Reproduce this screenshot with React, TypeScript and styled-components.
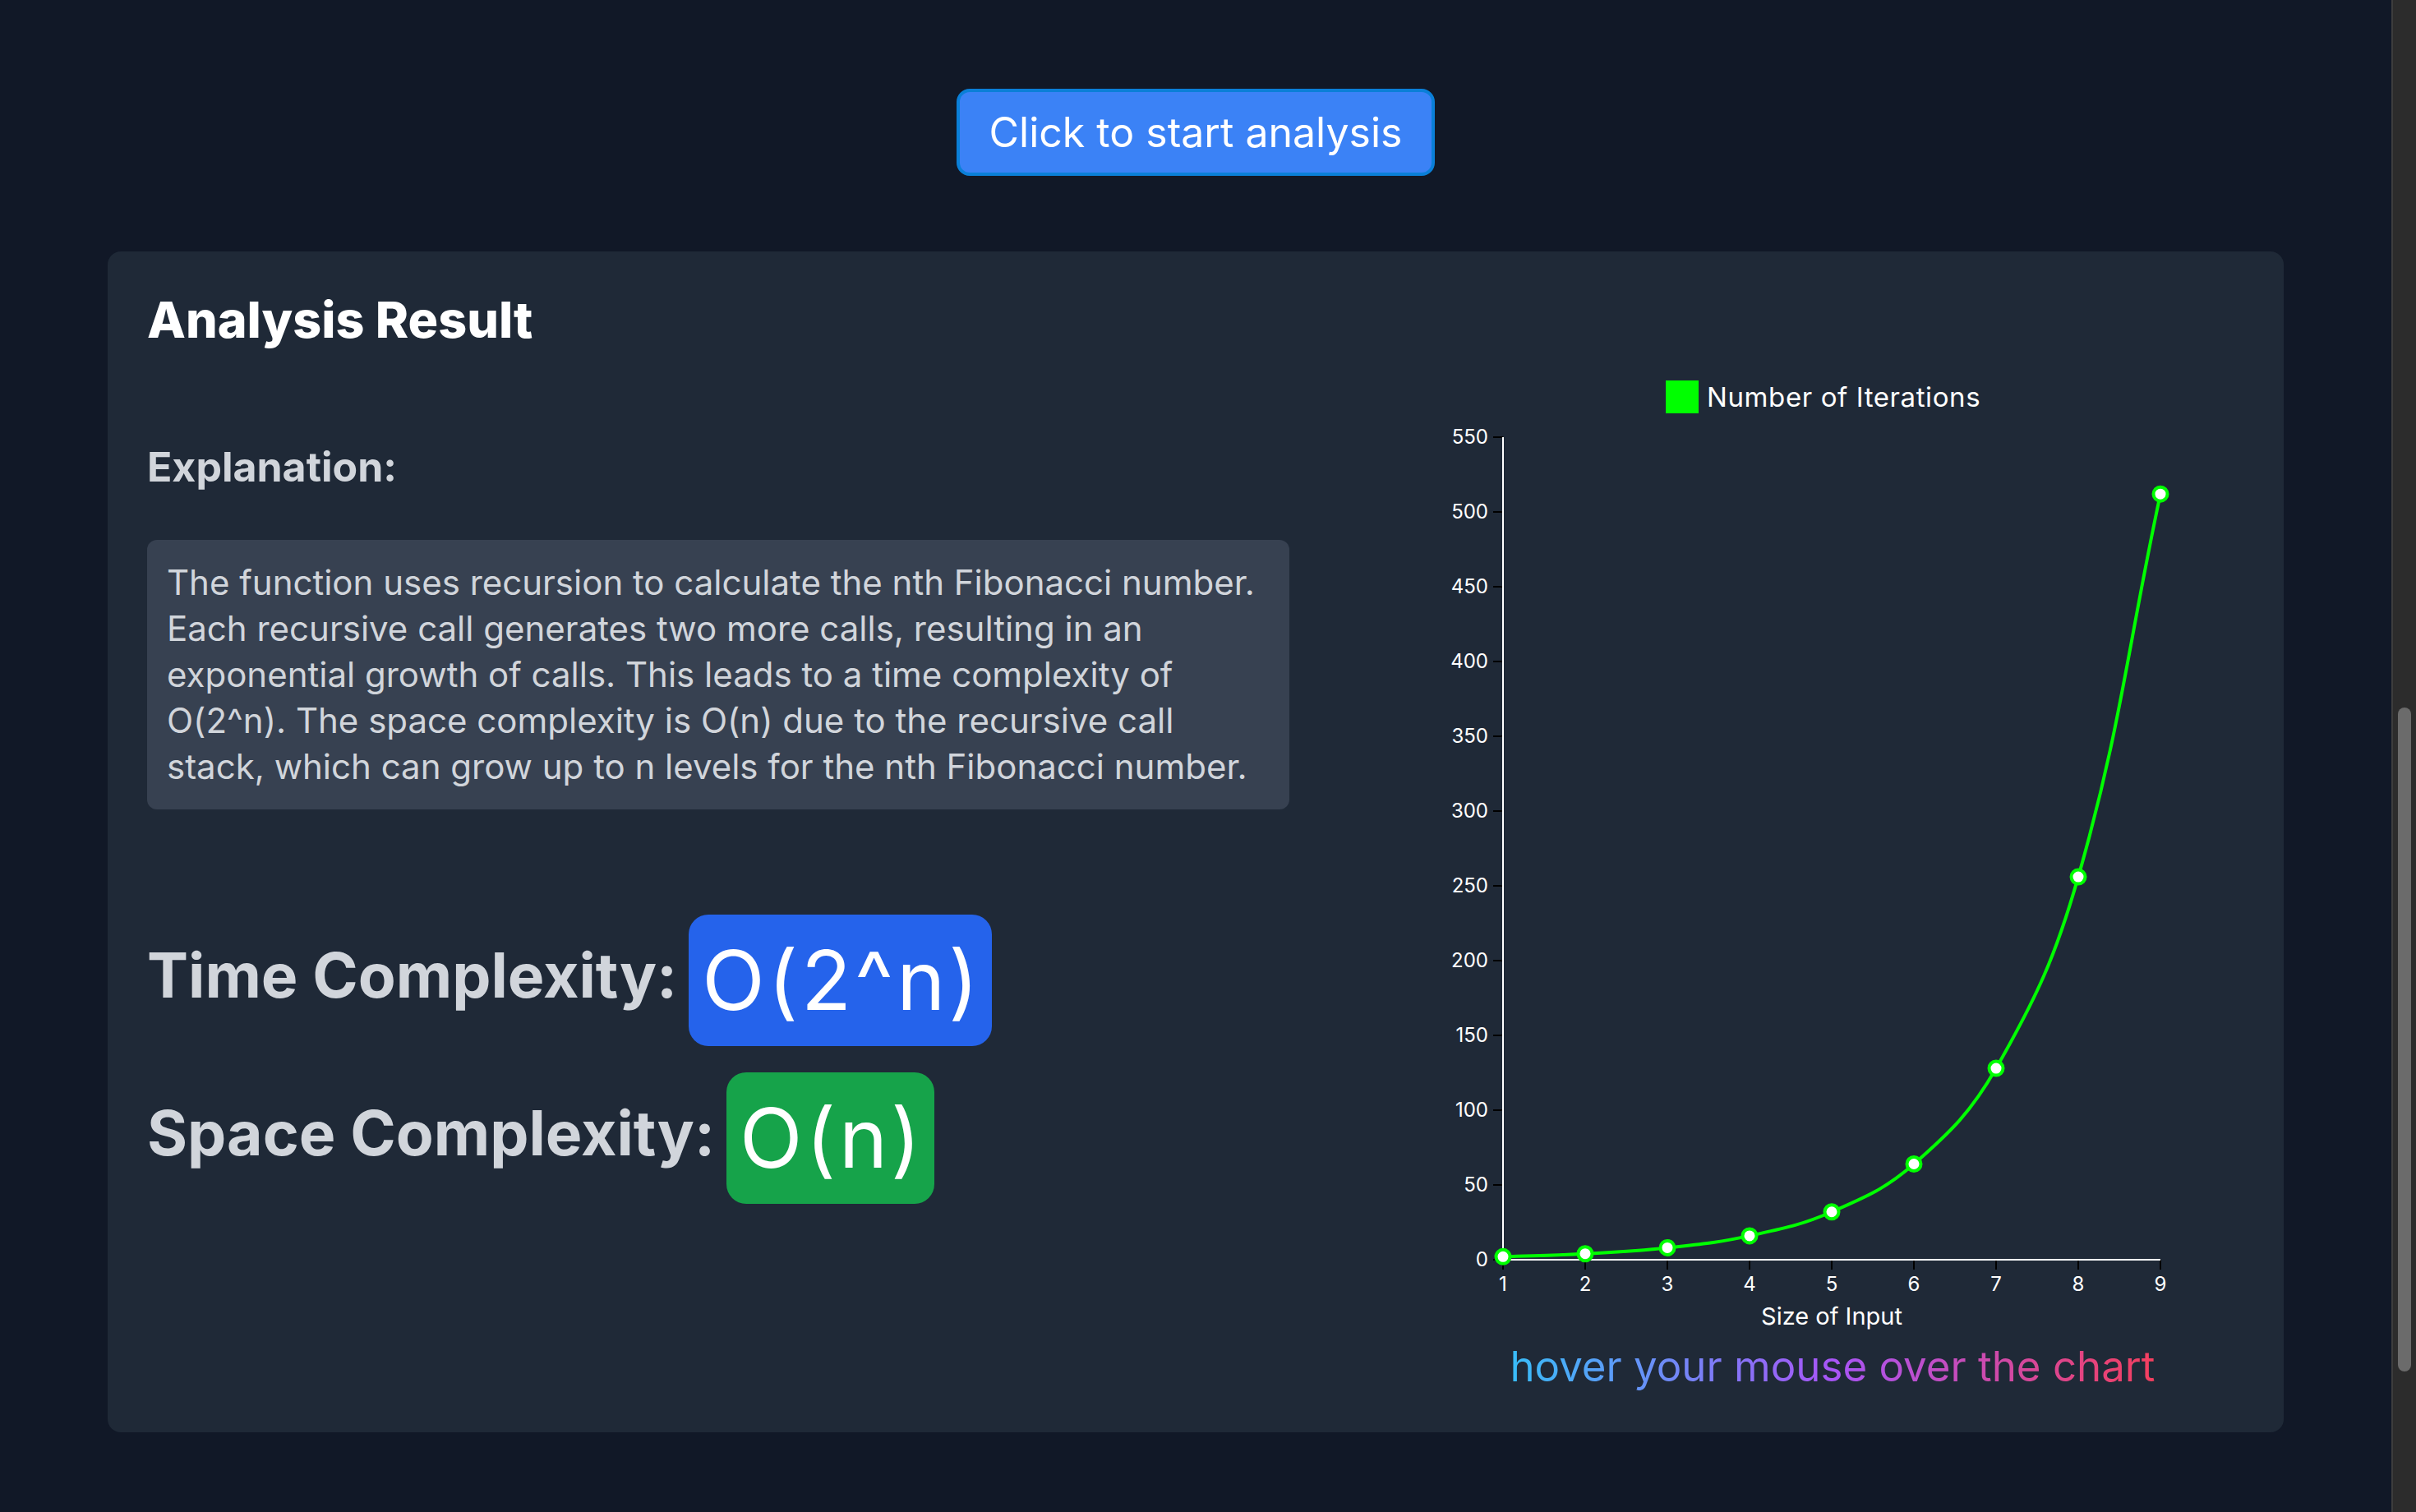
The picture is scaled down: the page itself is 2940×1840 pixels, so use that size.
import React from 'react';
import styled, { createGlobalStyle } from 'styled-components';

const GlobalStyle = createGlobalStyle`
    html, body {
        margin: 0;
        padding: 0;
        background: #111827;
        overflow: hidden;
    }
    body {
        font-family: Inter, "Noto Sans", sans-serif;
    }
`

const Page = styled.div`
    display: flex;
    height: 1840px;
`

const Main = styled.main`
    flex: 1;
    display: flex;
    flex-direction: column;
    align-items: center;
    padding-top: 108px;
`

const StartButton = styled.button`
    width: 582px;
    height: 106px;
    box-sizing: border-box;
    background: #3b82f6;
    border: 4px solid #0a7fd8;
    border-radius: 16px;
    color: #ffffff;
    font-family: Inter, sans-serif;
    font-size: 50px;
    cursor: pointer;
`

const Card = styled.section`
    align-self: stretch;
    margin: 92px 131px 0;
    padding: 48px;
    background: #1f2937;
    border-radius: 16px;
`

const Title = styled.h2`
    margin: 0;
    font-size: 61px;
    line-height: 70px;
    font-weight: 800;
    color: #ffffff;
`

const Columns = styled.div`
    display: flex;
    align-items: flex-start;
    padding-top: 2px;
`

const LeftCol = styled.div`
    width: 1390px;
    flex: 0 0 1390px;
    padding-top: 110px;
`

const SectionHeading = styled.h3`
    margin: 0 0 57px;
    font-size: 50px;
    line-height: 64px;
    font-weight: 700;
    color: #d1d5db;
`

const ExplanationBox = styled.p`
    margin: 0;
    padding: 24px;
    background: #374151;
    border-radius: 12px;
    color: #d1d5db;
    font-size: 42px;
    line-height: 56px;
    white-space: nowrap;
`

const ComplexityRow = styled.div<{ $first?: boolean }>`
    display: flex;
    align-items: center;
    gap: 14px;
    margin-top: ${p => (p.$first ? '128px' : '32px')};
`

const ComplexityLabel = styled.span`
    font-size: 75px;
    line-height: 80px;
    padding-bottom: 12px;
    font-weight: 700;
    color: #d1d5db;
`

const Badge = styled.span<{ $tone: 'blue' | 'green' }>`
    display: inline-flex;
    align-items: center;
    height: 160px;
    padding: 0 12px 0 16px;
    box-sizing: border-box;
    border-radius: 24px;
    background: ${p => (p.$tone === 'blue' ? '#2563eb' : '#16a34a')};
    color: #ffffff;
    font-size: 100px;
    line-height: 100px;
    letter-spacing: 4px;
    font-weight: 400;
`

const ChartCol = styled.div`
    flex: 1;
    margin-left: 160px;
    padding-top: 14px;
    display: flex;
    flex-direction: column;
    align-items: center;
`

const HoverHint = styled.div`
    font-size: 51px;
    line-height: 64px;
    background: linear-gradient(to right, #38bdf8, #a855f7, #f43f5e);
    -webkit-background-clip: text;
    background-clip: text;
    color: transparent;
`

const ScrollRail = styled.div`
    width: 28px;
    flex: 0 0 28px;
    background: #2c2c2c;
    border-left: 2px solid #3d3d3d;
    padding-top: 861px;
`

const ScrollThumb = styled.div`
    width: 16px;
    height: 808px;
    margin-left: 6px;
    border-radius: 8px;
    background: #6b6b6b;
`

// chart geometry (svg coords)
const W = 962;
const H = 1191;
const X0 = 80;
const STEP_X = 100;
const Y0 = 1093;
const PER_UNIT = 91 / 50;

type Pt = { x: number; y: number };

const data = [1, 2, 3, 4, 5, 6, 7, 8, 9].map(n => ({ n, v: Math.pow(2, n) }));
const pts: Pt[] = data.map((d, i) => ({ x: X0 + i * STEP_X, y: Y0 - d.v * PER_UNIT }));

// same control points as chart.js with tension 0.4
function curvePath(p: Pt[], t: number) {
    const ctrl = p.map((cur, i) => {
        const prev = p[i - 1] || cur;
        const next = p[i + 1] || cur;
        const d01 = Math.hypot(cur.x - prev.x, cur.y - prev.y);
        const d12 = Math.hypot(next.x - cur.x, next.y - cur.y);
        const s01 = d01 / (d01 + d12) || 0;
        const s12 = d12 / (d01 + d12) || 0;
        const fa = t * s01;
        const fb = t * s12;
        return {
            prev: { x: cur.x - fa * (next.x - prev.x), y: cur.y - fa * (next.y - prev.y) },
            next: { x: cur.x + fb * (next.x - prev.x), y: Math.min(Y0, cur.y + fb * (next.y - prev.y)) },
        };
    });
    let d = `M ${p[0].x} ${p[0].y}`;
    for (let i = 1; i < p.length; i++) {
        const a = ctrl[i - 1].next;
        const b = ctrl[i].prev;
        d += ` C ${a.x} ${a.y} ${b.x} ${b.y} ${p[i].x} ${p[i].y}`;
    }
    return d;
}

const yTicks = [0, 50, 100, 150, 200, 250, 300, 350, 400, 450, 500, 550];

function IterationsChart() {
    const font = 'Inter, sans-serif';
    return (
        <svg width={W} height={H} viewBox={`0 0 ${W} ${H}`}>
            <rect x={278} y={23} width={40} height={40} fill="#00ff00" />
            <text x={328} y={55} fill="#ffffff" fontSize={33} letterSpacing={0.6} fontFamily={font}>Number of Iterations</text>

            {yTicks.map(t => {
                const y = Y0 - t * PER_UNIT;
                return (
                    <g key={t}>
                        <line x1={68} x2={X0} y1={y} y2={y} stroke="#000000" strokeWidth={2} />
                        <text x={62} y={y + 8} textAnchor="end" fill="#ffffff" fontSize={24} fontFamily={font}>{t}</text>
                    </g>
                );
            })}
            {data.map((d, i) => {
                const x = X0 + i * STEP_X;
                return (
                    <g key={d.n}>
                        <line x1={x} x2={x} y1={Y0} y2={Y0 + 12} stroke="#000000" strokeWidth={2} />
                        <text x={x} y={Y0 + 38} textAnchor="middle" fill="#ffffff" fontSize={24} fontFamily={font}>{d.n}</text>
                    </g>
                );
            })}
            <line x1={X0} x2={X0} y1={Y0 - 550 * PER_UNIT} y2={Y0 + 1} stroke="#ffffff" strokeWidth={2} />
            <line x1={X0} x2={X0 + 8 * STEP_X} y1={Y0} y2={Y0} stroke="#ffffff" strokeWidth={2} />
            <text x={480} y={1172} textAnchor="middle" fill="#ffffff" fontSize={29} fontFamily={font}>Size of Input</text>

            <path d={curvePath(pts, 0.4)} fill="none" stroke="#00ff00" strokeWidth={4} />
            {pts.map((p, i) => (
                <circle key={i} cx={p.x} cy={p.y} r={8.5} fill="#ffffff" stroke="#00ff00" strokeWidth={4} />
            ))}
        </svg>
    );
}

function App() {
    return (
        <Page>
            <GlobalStyle />
            <Main>
                <StartButton>Click to start analysis</StartButton>
                <Card>
                    <Title>Analysis Result</Title>
                    <Columns>
                        <LeftCol>
                            <SectionHeading>Explanation:</SectionHeading>
                            <ExplanationBox>
                                The function uses recursion to calculate the nth Fibonacci number.<br />
                                Each recursive call generates two more calls, resulting in an<br />
                                exponential growth of calls. This leads to a time complexity of<br />
                                O(2^n). The space complexity is O(n) due to the recursive call<br />
                                stack, which can grow up to n levels for the nth Fibonacci number.
                            </ExplanationBox>
                            <ComplexityRow $first>
                                <ComplexityLabel>Time Complexity:</ComplexityLabel>
                                <Badge $tone="blue">O(2^n)</Badge>
                            </ComplexityRow>
                            <ComplexityRow>
                                <ComplexityLabel>Space Complexity:</ComplexityLabel>
                                <Badge $tone="green">O(n)</Badge>
                            </ComplexityRow>
                        </LeftCol>
                        <ChartCol>
                            <IterationsChart />
                            <HoverHint>hover your mouse over the chart</HoverHint>
                        </ChartCol>
                    </Columns>
                </Card>
            </Main>
            <ScrollRail>
                <ScrollThumb />
            </ScrollRail>
        </Page>
    );
}

export default App;
